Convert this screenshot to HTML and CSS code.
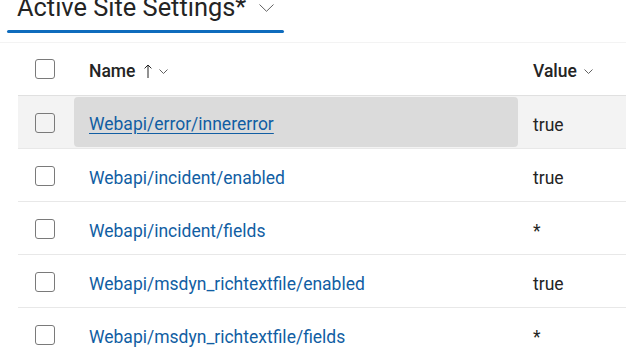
FILE: index.html
```html
<!DOCTYPE html>
<html>
<head>
<meta charset="utf-8">
<link rel="stylesheet" href="styles.css">
</head>
<body>
<div class="topbar">
  <div class="tab">
    <div class="tab-label">
      <span class="tab-title">Active Site Settings*</span>
      <svg class="tab-chev" width="15" height="8" viewBox="0 0 15 8"><polyline points="0.5,0.5 7.5,7.3 14.5,0.5" fill="none" stroke="#616161" stroke-width="1"/></svg>
    </div>
    <div class="tab-underline"></div>
  </div>
</div>
<div class="grid">
  <div class="row head">
    <div class="cell check"><span class="box"></span></div>
    <div class="cell name"><span class="htext">Name</span>
      <svg class="sort" width="8" height="15" viewBox="0 0 8 15"><path d="M4 1 V14 M0.6 4.4 L4 1 L7.4 4.4" fill="none" stroke="#242424" stroke-width="1"/></svg>
      <svg class="hchev" width="9" height="5" viewBox="0 0 9 5"><polyline points="0.5,0.5 4.5,4.5 8.5,0.5" fill="none" stroke="#616161" stroke-width="1"/></svg>
    </div>
    <div class="cell value"><span class="htext">Value</span>
      <svg class="hchev" width="9" height="5" viewBox="0 0 9 5"><polyline points="0.5,0.5 4.5,4.5 8.5,0.5" fill="none" stroke="#616161" stroke-width="1"/></svg>
    </div>
  </div>
  <div class="row hovered">
    <div class="cell check"><span class="box"></span></div>
    <div class="cell name"><div class="hover-bg"><a class="link under">Webapi/error/innererror</a></div></div>
    <div class="cell value">true</div>
  </div>
  <div class="row">
    <div class="cell check"><span class="box"></span></div>
    <div class="cell name"><a class="link">Webapi/incident/enabled</a></div>
    <div class="cell value">true</div>
  </div>
  <div class="row">
    <div class="cell check"><span class="box"></span></div>
    <div class="cell name"><a class="link">Webapi/incident/fields</a></div>
    <div class="cell value">*</div>
  </div>
  <div class="row">
    <div class="cell check"><span class="box"></span></div>
    <div class="cell name"><a class="link">Webapi/msdyn_richtextfile/enabled</a></div>
    <div class="cell value">true</div>
  </div>
  <div class="row">
    <div class="cell check"><span class="box"></span></div>
    <div class="cell name"><a class="link">Webapi/msdyn_richtextfile/fields</a></div>
    <div class="cell value">*</div>
  </div>
</div>
</body>
</html>
```
FILE: styles.css
```css
html, body {
  margin: 0;
  padding: 0;
  background: #ffffff;
  font-family: Roboto, "Noto Sans", sans-serif;
  color: #242424;
  overflow: hidden;
}
.topbar {
  height: 43px;
  border-bottom: 1px solid #f3f3f3;
  box-sizing: border-box;
}
.tab {
  display: inline-flex;
  flex-direction: column;
  margin-left: 7px;
  margin-top: -9px;
}
.tab-label {
  display: flex;
  align-items: flex-start;
  padding: 0 10px 0 10px;
  height: 39px;
}
.tab-title {
  font-size: 25.4px;
  line-height: 32px;
  color: #242424;
}
.tab-chev {
  margin-left: 13px;
  margin-top: 13px;
}
.tab-underline {
  height: 3px;
  border-radius: 2px;
  background: #0f6cbd;
}
.grid {
  padding-left: 18px;
}
.row {
  display: grid;
  grid-template-columns: 56px 446px 1fr;
  height: 53px;
}
.cell {
  display: flex;
  align-items: center;
  border-bottom: 1px solid #e8e8e8;
  font-size: 17.5px;
  line-height: 22px;
  padding-top: 5px;
}
.head .cell {
  border-bottom-color: #e0e0e0;
  padding-top: 4px;
}
.check {
  justify-content: center;
  padding-top: 1px;
}
.head .check {
  padding-top: 0;
}
.box {
  width: 18px;
  height: 18px;
  border: 1px solid #7a7a7a;
  border-radius: 3px;
  box-sizing: content-box;
  margin-left: -2px;
}
.name {
  padding-left: 15px;
}
.value {
  padding-left: 13px;
}
.htext {
  font-weight: 500;
}
.sort {
  margin-left: 9px;
}
.hchev {
  margin-left: 7px;
  margin-top: 1px;
}
.hovered {
  background: #f3f3f3;
}
.hovered .name {
  padding: 1px 2px 1px 0;
}
.hover-bg {
  flex: 1;
  align-self: stretch;
  display: flex;
  align-items: center;
  padding-left: 15px;
  padding-top: 4px;
  background: #dbdbdb;
  border-radius: 4px;
}
.link {
  color: #115ea3;
  text-decoration: none;
}
.link.under {
  text-decoration: underline;
  text-underline-offset: 3px;
}
```
